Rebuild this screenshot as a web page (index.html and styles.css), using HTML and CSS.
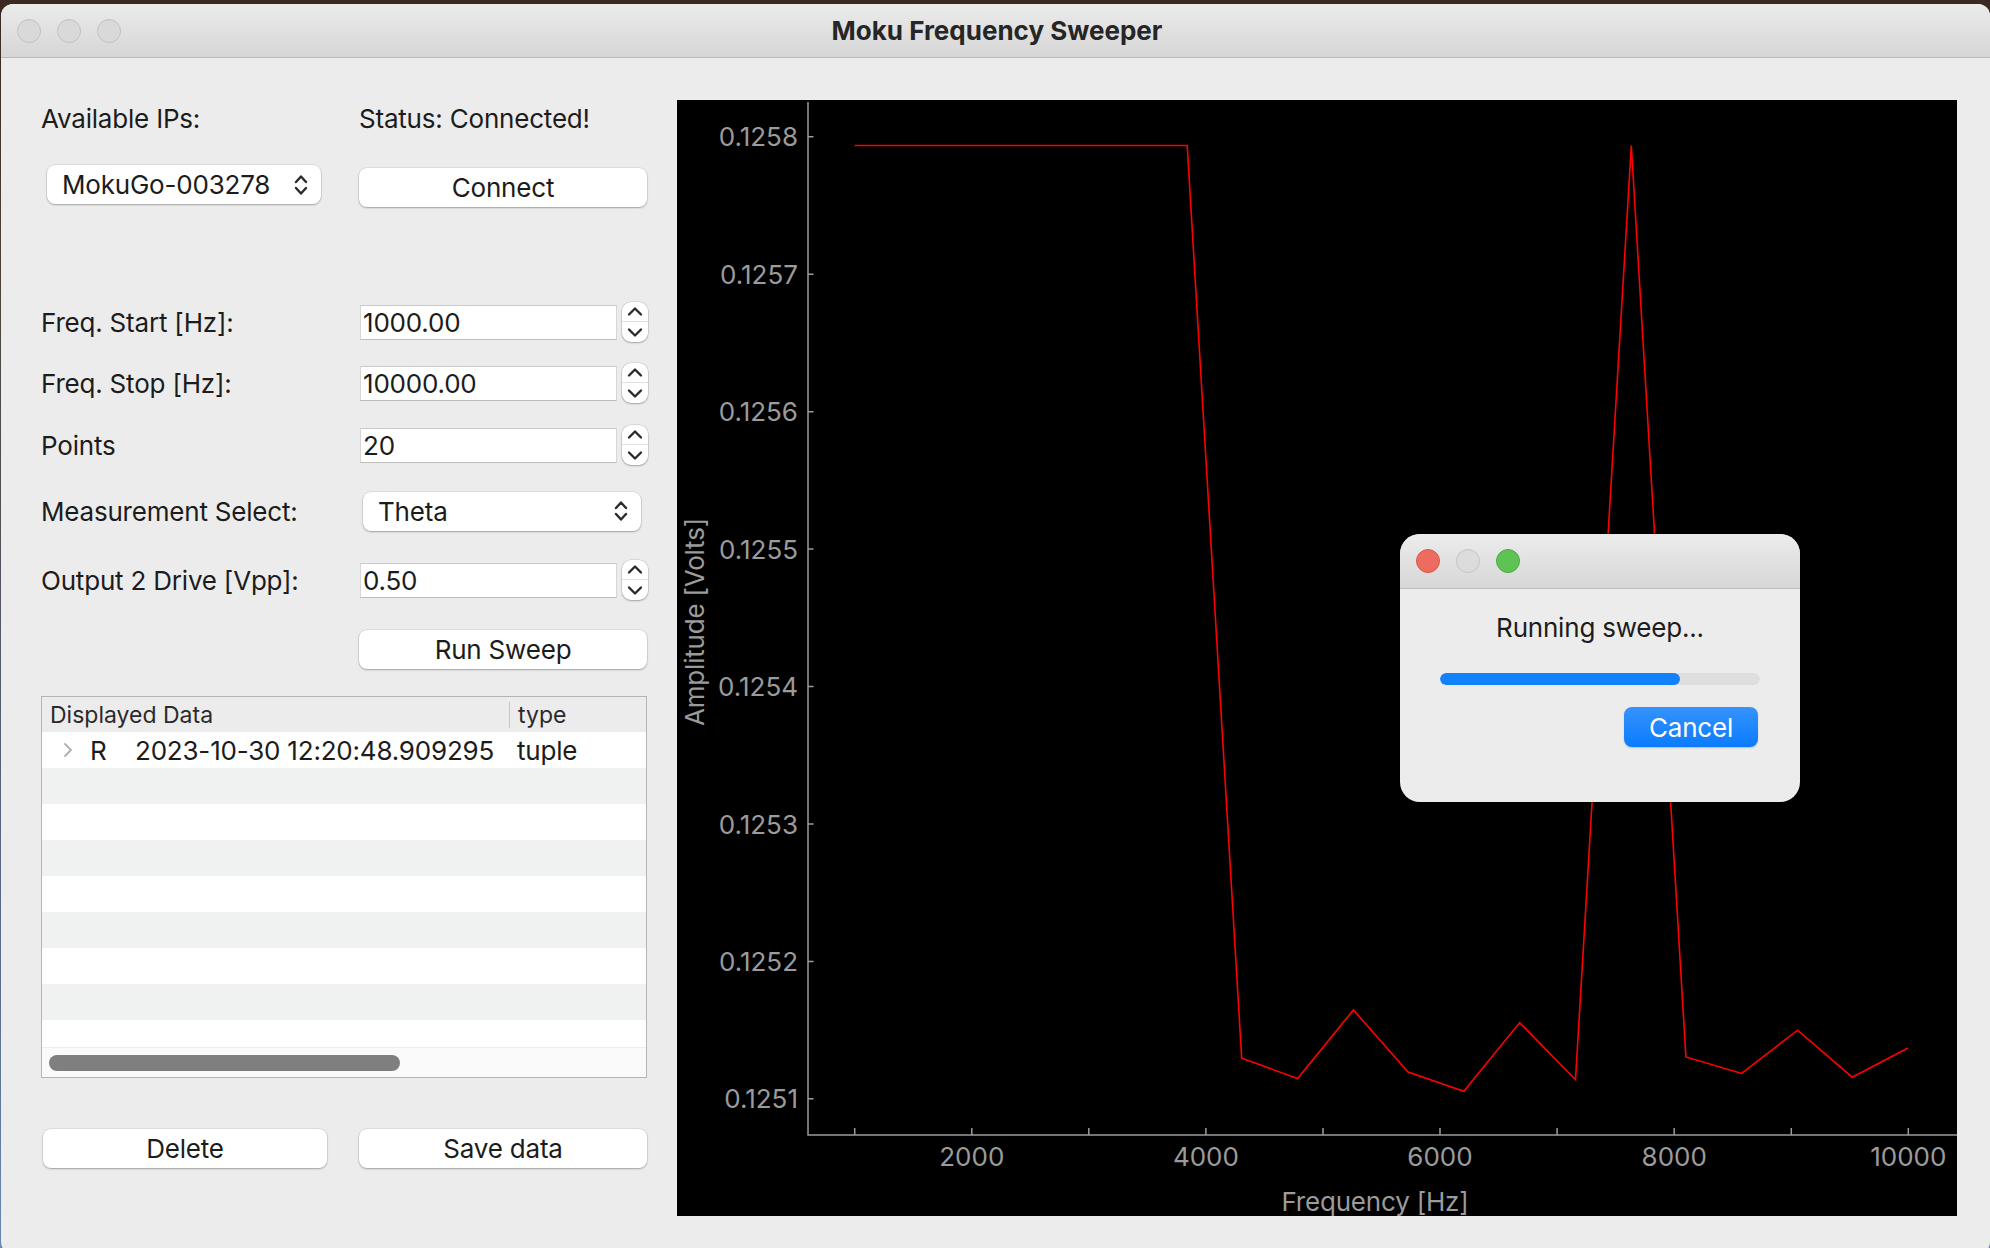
FILE: index.html
```html
<!DOCTYPE html>
<html>
<head>
<meta charset="utf-8">
<link rel="stylesheet" href="styles.css">
</head>
<body>
<div class="window">
  <div class="titlebar">
    <div class="lights">
      <span class="light"></span><span class="light"></span><span class="light"></span>
    </div>
    <div class="title">Moku Frequency Sweeper</div>
  </div>
  <div class="content">
    <div class="panel">
      <div class="row r-labels">
        <div class="label">Available IPs:</div>
        <div class="label status">Status: Connected!</div>
      </div>
      <div class="row r-ip">
        <div class="select select-ip"><span>MokuGo-003278</span>
          <svg class="updown" width="16" height="26" viewBox="0 0 16 26"><path d="M3 10 L8 4.5 L13 10 M3 16 L8 21.5 L13 16" fill="none" stroke="#2b2b2b" stroke-width="2.4" stroke-linecap="round" stroke-linejoin="round"/></svg>
        </div>
        <div class="btn btn-connect">Connect</div>
      </div>
      <div class="row r-start">
        <div class="label">Freq. Start [Hz]:</div>
        <div class="field"><div class="input">1000.00</div>
          <svg class="spin" width="26" height="40" viewBox="0 0 26 40"><path d="M7 12.5 L13 6.5 L19 12.5 M7 27.5 L13 33.5 L19 27.5" fill="none" stroke="#2b2b2b" stroke-width="2.4" stroke-linecap="round" stroke-linejoin="round"/></svg>
        </div>
      </div>
      <div class="row r-stop">
        <div class="label">Freq. Stop [Hz]:</div>
        <div class="field"><div class="input">10000.00</div>
          <svg class="spin" width="26" height="40" viewBox="0 0 26 40"><path d="M7 12.5 L13 6.5 L19 12.5 M7 27.5 L13 33.5 L19 27.5" fill="none" stroke="#2b2b2b" stroke-width="2.4" stroke-linecap="round" stroke-linejoin="round"/></svg>
        </div>
      </div>
      <div class="row r-points">
        <div class="label">Points</div>
        <div class="field"><div class="input">20</div>
          <svg class="spin" width="26" height="40" viewBox="0 0 26 40"><path d="M7 12.5 L13 6.5 L19 12.5 M7 27.5 L13 33.5 L19 27.5" fill="none" stroke="#2b2b2b" stroke-width="2.4" stroke-linecap="round" stroke-linejoin="round"/></svg>
        </div>
      </div>
      <div class="row r-meas">
        <div class="label">Measurement Select:</div>
        <div class="select select-meas"><span>Theta</span>
          <svg class="updown" width="16" height="26" viewBox="0 0 16 26"><path d="M3 10 L8 4.5 L13 10 M3 16 L8 21.5 L13 16" fill="none" stroke="#2b2b2b" stroke-width="2.4" stroke-linecap="round" stroke-linejoin="round"/></svg>
        </div>
      </div>
      <div class="row r-out">
        <div class="label">Output 2 Drive [Vpp]:</div>
        <div class="field"><div class="input">0.50</div>
          <svg class="spin" width="26" height="40" viewBox="0 0 26 40"><path d="M7 12.5 L13 6.5 L19 12.5 M7 27.5 L13 33.5 L19 27.5" fill="none" stroke="#2b2b2b" stroke-width="2.4" stroke-linecap="round" stroke-linejoin="round"/></svg>
        </div>
      </div>
      <div class="row r-run">
        <div></div>
        <div class="btn">Run Sweep</div>
      </div>
      <div class="table">
        <div class="thead">
          <div class="th th-data">Displayed Data</div>
          <div class="th th-type">type</div>
        </div>
        <div class="tbody">
          <div class="tr">
            <svg class="expander" width="10" height="18" viewBox="0 0 10 18"><path d="M2 3 L8 9 L2 15" fill="none" stroke="#b0b0b0" stroke-width="1.8" stroke-linecap="round" stroke-linejoin="round"/></svg>
            <span class="cell-r">R</span>
            <span class="cell-date">2023-10-30 12:20:48.909295</span>
            <span class="cell-type">tuple</span>
          </div>
          <div class="tr alt"></div>
          <div class="tr"></div>
          <div class="tr alt"></div>
          <div class="tr"></div>
          <div class="tr alt"></div>
          <div class="tr"></div>
          <div class="tr alt"></div>
          <div class="tr"></div>
        </div>
        <div class="hscroll"><div class="thumb"></div></div>
      </div>
      <div class="row r-bottom">
        <div class="btn btn-delete">Delete</div>
        <div class="btn">Save data</div>
      </div>
    </div>
    <div class="plot">
      <svg width="1280" height="1116" viewBox="0 0 1280 1116">
        <rect width="1280" height="1116" fill="#000"/>
        <g stroke="#9b9b9b" stroke-width="1.5" fill="none">
          <path d="M131 2 V1035 H1280"/>
          <path d="M131 36.8 h5.5 M131 174.2 h5.5 M131 311.7 h5.5 M131 449.1 h5.5 M131 586.5 h5.5 M131 724 h5.5 M131 861.4 h5.5 M131 998.8 h5.5"/>
          <path d="M177.7 1035 v-7 M294.8 1035 v-7 M411.8 1035 v-7 M528.9 1035 v-7 M646 1035 v-7 M763 1035 v-7 M880.1 1035 v-7 M997.2 1035 v-7 M1114.3 1035 v-7 M1231.3 1035 v-7"/>
        </g>
        <g class="ticklabel" fill="#9b9b9b" text-anchor="end" dominant-baseline="central">
          <text x="121" y="36.8">0.1258</text>
          <text x="121" y="174.2">0.1257</text>
          <text x="121" y="311.7">0.1256</text>
          <text x="121" y="449.1">0.1255</text>
          <text x="121" y="586.5">0.1254</text>
          <text x="121" y="724">0.1253</text>
          <text x="121" y="861.4">0.1252</text>
          <text x="121" y="998.8">0.1251</text>
        </g>
        <g class="ticklabel" fill="#9b9b9b" text-anchor="middle" dominant-baseline="central">
          <text x="294.8" y="1056">2000</text>
          <text x="528.9" y="1056">4000</text>
          <text x="763" y="1056">6000</text>
          <text x="997.2" y="1056">8000</text>
          <text x="1231.3" y="1056">10000</text>
        </g>
        <text class="axistitle" x="698" y="1101" fill="#9b9b9b" text-anchor="middle" dominant-baseline="central">Frequency [Hz]</text>
        <text class="axistitle" x="0" y="0" fill="#9b9b9b" text-anchor="middle" dominant-baseline="central" transform="translate(17 522) rotate(-90)">Amplitude [Volts]</text>
        <polyline fill="none" stroke="#ff0000" stroke-width="1.6" stroke-linejoin="miter" points="177.7,45.5 235,45.5 291,45.5 347,45.5 402,45.5 457,45.5 510.2,45.5 564.7,958.2 620.6,978.5 676.4,909.9 731,972.1 786.8,991.2 842.7,922.6 898.5,979.7 954.3,45.5 1008.9,956.9 1064.7,973.4 1120.6,930.2 1175.2,977.2 1231,948"/>
      </svg>
    </div>
  </div>
  <div class="dialog">
    <div class="dlg-titlebar">
      <span class="light red"></span><span class="light gray"></span><span class="light green"></span>
    </div>
    <div class="dlg-body">
      <div class="dlg-text">Running sweep...</div>
      <div class="progress"><div class="progress-fill" style="width: 75%"></div></div>
      <div class="dlg-actions"><div class="btn-primary">Cancel</div></div>
    </div>
  </div>
</div>
</body>
</html>
```
FILE: styles.css
```css
html, body {
  margin: 0;
  padding: 0;
}
body {
  width: 1990px;
  height: 1248px;
  overflow: hidden;
  background: linear-gradient(180deg, #3a2a22 0%, #4b4236 20%, #5b6f92 80%, #6a86b0 100%);
  font-family: Inter, "Liberation Sans", Arial, sans-serif;
  color: #1c1c1c;
}
.window {
  position: relative;
  margin: 4px 0 0 1px;
  width: 1989px;
  height: 1250px;
  background: #ececec;
  border-radius: 12px;
  overflow: hidden;
}
.titlebar {
  position: relative;
  height: 53px;
  border-bottom: 1px solid #b8b8b8;
  background: linear-gradient(180deg, #ebebeb 0%, #d6d6d6 100%);
  display: flex;
  align-items: center;
  justify-content: center;
}
.lights {
  position: absolute;
  left: 16px;
  top: 15px;
  display: flex;
  gap: 16px;
}
.light {
  display: block;
  width: 22px;
  height: 22px;
  border-radius: 50%;
  background: #d9d9d9;
  border: 1px solid #c2c2c2;
}
.title {
  font-weight: 700;
  font-size: 26px;
  color: #262626;
  margin-left: 3px;
}
.content {
  display: flex;
  padding: 42px 0 0 40px;
  gap: 29px;
}
.panel {
  width: 607px;
  display: flex;
  flex-direction: column;
}
.row {
  display: grid;
  grid-template-columns: 318px 1fr;
  align-items: center;
}
.label {
  font-size: 26px;
  letter-spacing: -0.2px;
  white-space: nowrap;
}
.r-labels { height: 36px; }
.r-ip { margin-top: 29px; height: 43px; align-items: start; }
.r-start { margin-top: 94px; height: 40px; }
.r-stop { margin-top: 21px; height: 40px; }
.r-points { margin-top: 22px; height: 40px; }
.r-meas { margin-top: 26px; height: 40px; }
.r-out { margin-top: 29px; height: 40px; }
.r-run { margin-top: 29px; height: 40px; }
.r-bottom { margin-top: 50px; height: 41px; }

.select {
  height: 39px;
  background: #fff;
  border-radius: 8px;
  box-shadow: 0 0 0 0.5px rgba(0,0,0,0.12), 0 1px 2px rgba(0,0,0,0.28);
  display: flex;
  align-items: center;
  justify-content: space-between;
  padding: 0 12px 0 15px;
  box-sizing: border-box;
  font-size: 26px;
  letter-spacing: -0.2px;
}
.select-ip { width: 274px; margin-left: 6px; }
.select-meas { width: 278px; margin-left: 4px; }
.btn {
  height: 39px;
  width: 288px;
  background: #fff;
  border-radius: 8px;
  box-shadow: 0 0 0 0.5px rgba(0,0,0,0.12), 0 1px 2px rgba(0,0,0,0.28);
  display: flex;
  align-items: center;
  justify-content: center;
  font-size: 26px;
  letter-spacing: -0.2px;
}
.btn-connect { margin-top: 3px; }
.btn-delete { width: 284px; margin-left: 2px; }

.field {
  display: flex;
  align-items: center;
  gap: 5px;
  margin-left: 1px;
}
.input {
  width: 257px;
  height: 35px;
  box-sizing: border-box;
  background: #fff;
  border: 1px solid #d6d6d6;
  border-top-color: #c9c9c9;
  border-bottom-color: #bdbdbd;
  padding-left: 2px;
  font-size: 26px;
  letter-spacing: -0.2px;
  display: flex;
  align-items: center;
}
.spin {
  display: block;
  background: #fff;
  border-radius: 9px;
  box-shadow: 0 0 0 0.5px rgba(0,0,0,0.14), 0 1px 2px rgba(0,0,0,0.25);
  background-image: linear-gradient(180deg, transparent 19.5px, #e0e0e0 19.5px, #e0e0e0 20.5px, transparent 20.5px);
}

.table {
  margin-top: 27px;
  width: 606px;
  height: 382px;
  box-sizing: border-box;
  border: 1px solid #b5b5b5;
  background: #fff;
  display: flex;
  flex-direction: column;
  overflow: hidden;
}
.thead {
  height: 35px;
  background: #ececec;
  display: flex;
  align-items: center;
  flex: none;
}
.th {
  font-size: 23px;
  color: #2a2a2a;
}
.th-data {
  width: 467px;
  padding-left: 8px;
  box-sizing: border-box;
}
.th-type {
  border-left: 1.5px solid #c6c6c6;
  height: 26px;
  line-height: 26px;
  padding-left: 8px;
}
.tbody {
  flex: 1;
  overflow: hidden;
}
.tr {
  height: 36px;
  display: flex;
  align-items: center;
  font-size: 26px;
  letter-spacing: -0.2px;
}
.tr.alt { background: #f0f1f1; }
.expander { margin-left: 21px; }
.cell-r { margin-left: 17px; width: 45px; }
.cell-date { width: 382px; white-space: nowrap; }
.hscroll {
  height: 30px;
  flex: none;
  background: #fafafa;
  border-top: 1px solid #ececec;
  box-sizing: border-box;
  padding: 7px 0 0 7px;
}
.thumb {
  width: 351px;
  height: 16px;
  border-radius: 8px;
  background: #7f7f7f;
}

.plot {
  width: 1280px;
  height: 1116px;
  flex: none;
}
.plot svg { display: block; }
.ticklabel text {
  font-family: Inter, "Liberation Sans", Arial, sans-serif;
  font-size: 26px;
}
.axistitle {
  font-family: Inter, "Liberation Sans", Arial, sans-serif;
  font-size: 26px;
  letter-spacing: -0.2px;
}

.dialog {
  position: absolute;
  left: 1399px;
  top: 530px;
  width: 400px;
  height: 268px;
  background: #ececec;
  border-radius: 20px;
  overflow: hidden;
  box-shadow: 0 0 0 1px rgba(0,0,0,0.25);
}
.dlg-titlebar {
  height: 54px;
  border-bottom: 1.5px solid #bdbdbd;
  background: linear-gradient(180deg, #ececec 0%, #d7d7d7 100%);
  display: flex;
  align-items: center;
  gap: 16px;
  padding-left: 16px;
}
.light.red { background: #ee6b5f; border-color: #d85a4f; }
.light.gray { background: #dcdcdc; border-color: #c4c4c4; }
.light.green { background: #5ec352; border-color: #4eaa44; }
.dlg-body {
  display: flex;
  flex-direction: column;
  align-items: center;
}
.dlg-text {
  margin-top: 21px;
  font-size: 26px;
  letter-spacing: -0.2px;
  height: 36px;
  line-height: 36px;
}
.progress {
  margin-top: 27px;
  width: 320px;
  height: 12px;
  border-radius: 6px;
  background: #dedede;
  overflow: hidden;
}
.progress-fill {
  height: 100%;
  border-radius: 6px;
  background: #1182fc;
}
.dlg-actions {
  width: 320px;
  display: flex;
  justify-content: flex-end;
  margin-top: 22px;
}
.btn-primary {
  width: 134px;
  height: 40px;
  margin-right: 2px;
  border-radius: 8px;
  background: linear-gradient(180deg, #3693fb 0%, #0a7bff 100%);
  color: #fff;
  font-size: 26px;
  letter-spacing: -0.2px;
  display: flex;
  align-items: center;
  justify-content: center;
  box-shadow: 0 1px 1.5px rgba(0,0,0,0.2);
}
```
